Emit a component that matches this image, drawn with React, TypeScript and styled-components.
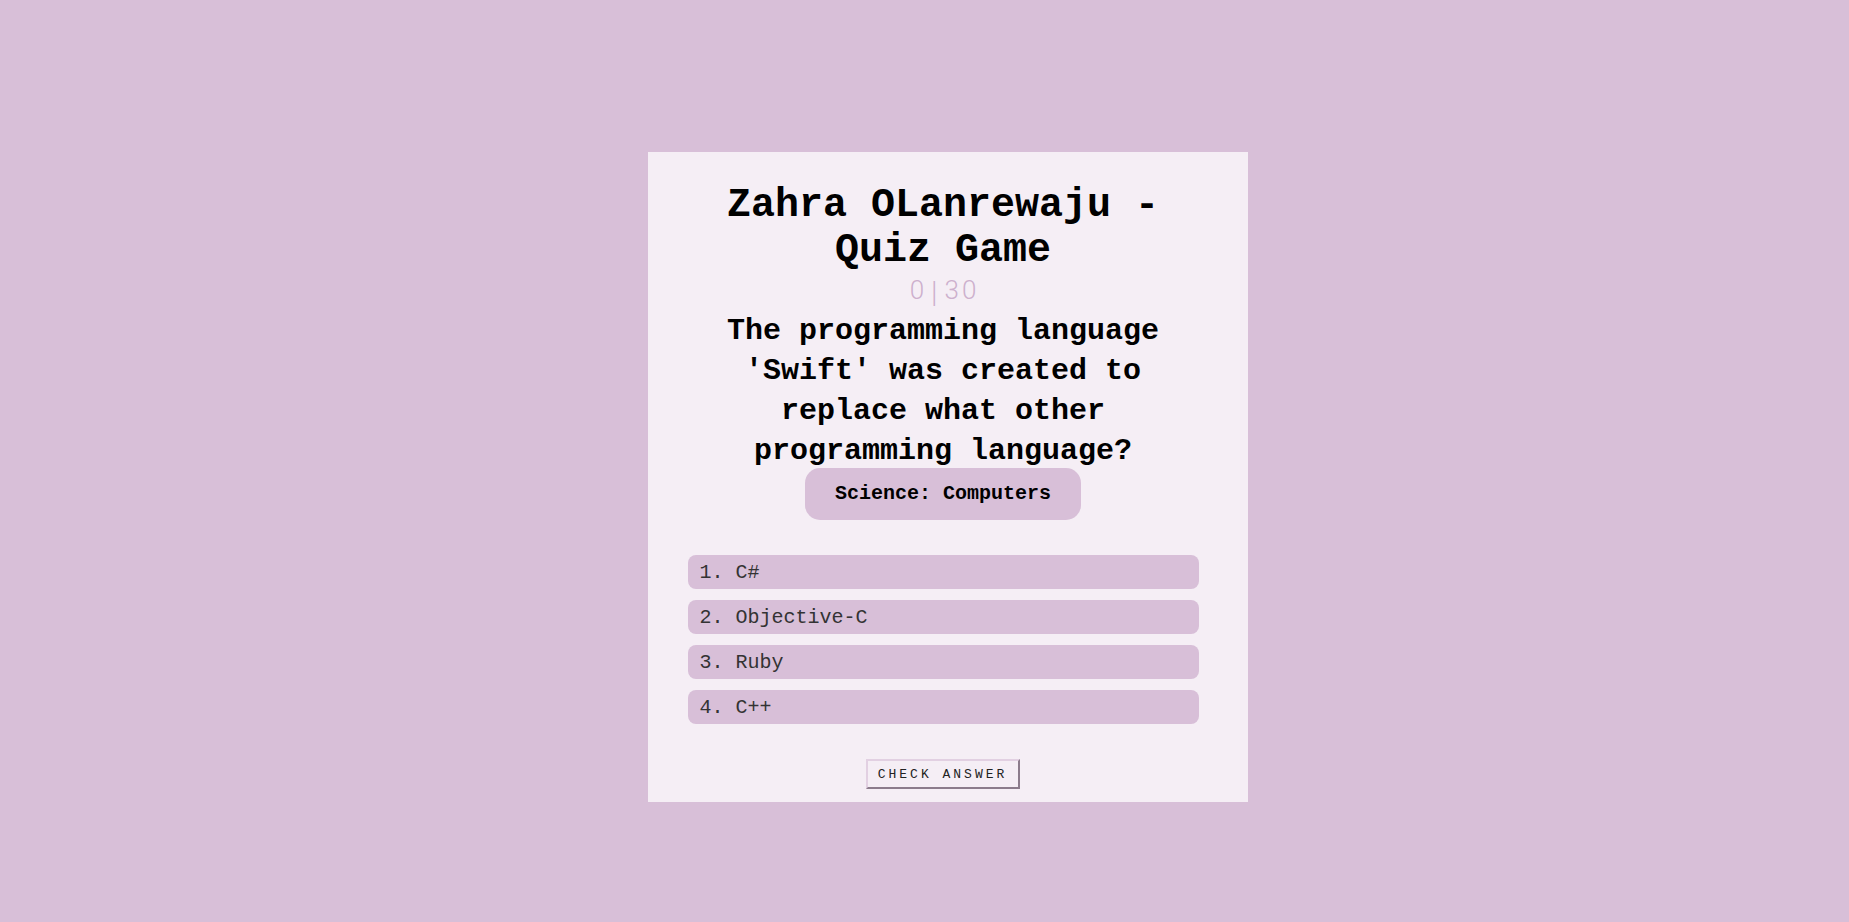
import React from "react";
import styled, { createGlobalStyle } from "styled-components";

const GlobalStyle = createGlobalStyle`
  html, body {
    margin: 0;
    padding: 0;
    background: #d8bfd8;
  }
  * { box-sizing: border-box; }
`;

const Page = styled.div`
  min-height: 100vh;
  display: flex;
  justify-content: center;
  align-items: flex-start;
  padding: 152px 0 0 47px;
  background: #d8bfd8;
  font-family: "Liberation Mono", "Courier New", monospace;
`;

const Card = styled.div`
  width: 600px;
  background: #f5eef5;
  padding: 31px 30px 13px 20px;
  display: flex;
  flex-direction: column;
  align-items: center;
`;

const Title = styled.h1`
  margin: 0;
  max-width: 470px;
  font-size: 40px;
  line-height: 45px;
  font-weight: 700;
  color: #000;
  text-align: center;
`;

const Score = styled.div`
  margin-top: 1px;
  height: 33px;
  display: flex;
  align-items: center;
  font-family: "Roboto", "Open Sans", sans-serif;
  font-weight: 300;
  font-size: 26px;
  line-height: 33px;
  letter-spacing: 3px;
  font-variant-numeric: tabular-nums;
  color: #cdb0cd;
  padding-left: 3px;
`;

const Bar = styled.span`
  font-size: 29px;
  line-height: 29px;
  margin: 3px 4px 0 4px;
`;

const Question = styled.h2`
  margin: 4px 0 0;
  max-width: 470px;
  font-size: 30px;
  line-height: 40px;
  font-weight: 700;
  color: #000;
  text-align: center;
`;

const Category = styled.div`
  margin-top: -3px;
  padding: 15px 30px;
  background: #d8bfd8;
  border-radius: 15px;
  font-size: 20px;
  line-height: 22px;
  font-weight: 700;
  color: #000;
`;

const AnswerList = styled.div`
  margin-top: 35px;
  width: 511px;
  display: flex;
  flex-direction: column;
  gap: 11px;
`;

const Answer = styled.div`
  height: 34px;
  display: flex;
  align-items: center;
  padding-left: 12px;
  background: #d8bfd8;
  border-radius: 8px;
  font-size: 20px;
  color: #333;
  cursor: pointer;
`;

const CheckButton = styled.button`
  margin-top: 35px;
  height: 30px;
  padding: 0 11px 0 10px;
  background: #f5eef5;
  border-style: solid;
  border-width: 2px;
  border-color: #e2d0e2 #8c7c8c #8c7c8c #e2d0e2;
  font-family: "Liberation Mono", "Courier New", monospace;
  font-size: 13px;
  letter-spacing: 3px;
  color: #222;
  cursor: pointer;
`;

const answers = ["C#", "Objective-C", "Ruby", "C++"];

export default function App() {
  return (
    <>
      <GlobalStyle />
      <Page>
        <Card>
          <Title>Zahra OLanrewaju - Quiz Game</Title>
          <Score>
            0<Bar>|</Bar>30
          </Score>
          <Question>
            The programming language 'Swift' was created to replace what other
            programming language?
          </Question>
          <Category>Science: Computers</Category>
          <AnswerList>
            {answers.map((a, i) => (
              <Answer key={a}>
                {i + 1}. {a}
              </Answer>
            ))}
          </AnswerList>
          <CheckButton>CHECK ANSWER</CheckButton>
        </Card>
      </Page>
    </>
  );
}
